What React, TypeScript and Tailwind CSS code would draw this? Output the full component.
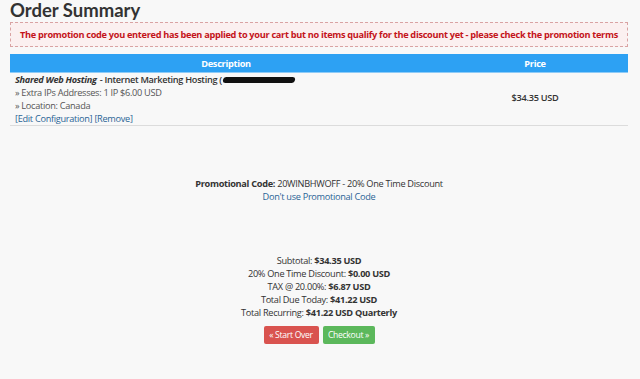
import React from 'react';

const totals = [
  { label: 'Subtotal:', value: '$34.35 USD' },
  { label: '20% One Time Discount:', value: '$0.00 USD' },
  { label: 'TAX @ 20.00%:', value: '$6.87 USD' },
  { label: 'Total Due Today:', value: '$41.22 USD' },
  { label: 'Total Recurring:', value: '$41.22 USD Quarterly' },
];

const App: React.FC = () => {
  return (
    <div className="w-[640px] h-[379px] bg-[#f8f8f8] text-[#333] text-[9.2px] tracking-[-0.3px] leading-[13px] overflow-hidden" style={{ fontFamily: '"Open Sans", sans-serif' }}>
      <div className="pl-[10px] pr-[12px]">
        <h1 className="text-[18.5px] leading-[19px] font-bold text-[#333] pt-[1px] tracking-[0px]" style={{ fontFamily: 'Lato, sans-serif' }}>Order Summary</h1>

        {/* Promo alert */}
        <div className="mt-[2px] h-[25px] flex items-center justify-center border border-dashed border-[#d9a3a3] bg-[#fbf0f0] text-[#c4141a] font-bold">
          The promotion code you entered has been applied to your cart but no items qualify for the discount yet - please check the promotion terms
        </div>

        {/* Cart table */}
        <div className="mt-[7px]">
          <div className="flex h-[19px] items-center bg-[#2da1f3] text-white font-bold border-b border-[#8ecbf7]">
            <div className="w-[432px] text-center">Description</div>
            <div className="flex-1 text-center">Price</div>
          </div>
          <div className="flex border-b border-[#dcdcdc]">
            <div className="w-[432px] pl-[5px]">
              <div className="flex items-center font-semibold">
                <i className="font-bold">Shared Web Hosting</i>
                <span className="ml-[3px]">- Internet Marketing Hosting (</span>
                <span className="inline-block w-[72px] h-[6px] bg-[#111] rounded-full ml-[1px] -skew-x-12" />
              </div>
              <div className="text-[#555]">» Extra IPs Addresses: 1 IP $6.00 USD</div>
              <div className="text-[#555]">» Location: Canada</div>
              <div className="text-[#2a6496]">[Edit Configuration] [Remove]</div>
            </div>
            <div className="flex-1 flex items-center justify-center font-semibold pb-[3px]">$34.35 USD</div>
          </div>
        </div>

        {/* Promo code */}
        <div className="mt-[51px] text-center">
          <div><b className="font-bold">Promotional Code:</b> 20WINBHWOFF - 20% One Time Discount</div>
          <div className="text-[#2a6496]">Don't use Promotional Code</div>
        </div>

        {/* Totals */}
        <div className="mt-[51px] text-center">
          {totals.map((t) => (
            <div key={t.label}>
              {t.label} <b className="font-bold">{t.value}</b>
            </div>
          ))}
          <div className="mt-[7px] flex justify-center gap-[4px]">
            <button className="h-[18px] w-[55px] rounded-[2px] bg-[#d9534f] text-white text-[8.6px]">« Start Over</button>
            <button className="h-[18px] w-[52px] rounded-[2px] bg-[#5cb85c] text-white text-[8.6px]">Checkout »</button>
          </div>
        </div>
      </div>
    </div>
  );
};

export default App;
